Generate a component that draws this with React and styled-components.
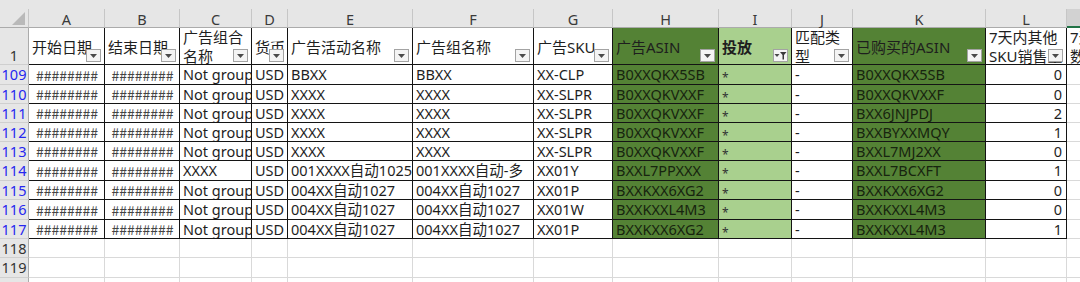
import React from "react";
import styled, { createGlobalStyle } from "styled-components";

const WIDTHS = [29, 76, 75, 72, 36, 125, 121, 79, 106, 73, 61, 133, 81, 80];
const TEMPLATE = WIDTHS.map((w) => `${w}px`).join(" ");
const HEIGHTS = [9, 19, 37, 20, 19, 19, 19, 19, 20, 19, 20, 19, 19, 20, 20];
const ROWS_TEMPLATE = HEIGHTS.map((h) => `${h}px`).join(" ");

const DARK = "#548235";
const LIGHT = "#a9d08e";
const FONT = `"Noto Sans", "Noto Sans CJK SC", sans-serif`;

const GlobalStyle = createGlobalStyle`
  html, body { margin: 0; padding: 0; background: #ffffff; overflow: hidden; }
  body { font-family: ${FONT}; }
`;

const Sheet = styled.div`
  display: grid;
  grid-template-columns: ${TEMPLATE};
  grid-template-rows: ${ROWS_TEMPLATE};
  width: max-content;
  font-family: ${FONT};
  font-size: 14.5px;
  color: #1e1e1e;
`;

const TopBand = styled.div`
  grid-column: 1 / -1;
  background: #e6e6e6;
`;

const Corner = styled.div`
  background: #e6e6e6;
  border-right: 1px solid #c6c6c6;
  border-bottom: 1px solid #ababab;
  box-sizing: border-box;
  display: flex;
  align-items: flex-end;
  justify-content: flex-end;
  padding: 0 2px 1px 0;
`;

const ColLetter = styled.div`
  background: ${(p) => (p.$active ? "#d2d2d2" : "#e6e6e6")};
  border-right: 1px solid #c6c6c6;
  border-bottom: ${(p) => (p.$active ? "2px solid #217346" : "1px solid #ababab")};
  box-sizing: border-box;
  display: flex;
  align-items: center;
  justify-content: center;
  padding-top: 2px;
  font-size: 14.5px;
  line-height: 1;
  color: #3a3a3a;
`;

const RowNum = styled.div`
  background: #e6e6e6;
  border-right: 1px solid #ababab;
  border-bottom: 1px solid #cfcfcf;
  box-sizing: border-box;
  display: flex;
  justify-content: center;
  align-items: ${(p) => (p.$bottom ? "flex-end" : "center")};
  padding-bottom: ${(p) => (p.$bottom ? "2px" : "0")};
  font-size: 14.5px;
  line-height: 1;
  color: ${(p) => (p.$filtered ? "#2626f0" : "#333333")};
`;

const HeadCell = styled.div`
  position: relative;
  background: ${(p) => p.$fill || "#ffffff"};
  border-right: 1px solid #141414;
  border-bottom: 1px solid #141414;
  box-sizing: border-box;
  padding: 2px 2px 0 3px;
  display: flex;
  align-items: center;
  overflow: hidden;
  line-height: 19px;
  font-size: 15px;
  font-weight: ${(p) => (p.$bold ? 700 : 400)};
  color: #1e1e1e;
`;

const DropButton = styled.span`
  position: absolute;
  right: 3px;
  bottom: 2px;
  width: 15px;
  height: 13px;
  box-sizing: border-box;
  border: 1px solid #a3a3a3;
  background: #f4f4f4;
  display: flex;
  align-items: center;
  justify-content: center;
`;

const Cell = styled.div`
  background: ${(p) => p.$fill || "#ffffff"};
  border-right: 1px solid ${(p) => (p.$grid ? "#d9d9d9" : "#141414")};
  border-bottom: 1px solid ${(p) => (p.$grid ? "#d9d9d9" : "#141414")};
  box-sizing: border-box;
  padding: 0 ${(p) => (p.$align === "flex-end" ? "4px" : "2px")} 0 3px;
  display: flex;
  align-items: center;
  justify-content: ${(p) => p.$align || "flex-start"};
  white-space: nowrap;
  overflow: hidden;
  font-family: ${(p) => (p.$hash ? `"Noto Sans CJK SC", sans-serif` : FONT)};
  font-size: ${(p) => (p.$hash ? "14px" : "14.5px")};
  line-height: 1;
  color: ${(p) => (p.$hash ? "#444444" : p.$fill === DARK ? "#17240f" : "#1e1e1e")};
`;

const Star = styled.span`
  font-size: 12px;
  padding-top: 7px;
  color: #333333;
`;

const DownArrow = () => (
  <svg width="7" height="4" viewBox="0 0 7 4">
    <polygon points="0,0 7,0 3.5,4" fill="#4a4a4a" />
  </svg>
);

const FunnelArrow = () => (
  <svg width="13" height="11" viewBox="0 0 13 11">
    <polygon points="0.5,4 5.5,4 3,7" fill="#4a4a4a" />
    <polygon points="6,2 12.5,2 10,5 10,9.5 8.5,9.5 8.5,5" fill="#3a3a3a" />
  </svg>
);

const CornerTriangle = () => (
  <svg width="15" height="15" viewBox="0 0 15 15">
    <polygon points="14,1 14,14 1,14" fill="#b9b9b9" />
  </svg>
);

const LETTERS = ["A", "B", "C", "D", "E", "F", "G", "H", "I", "J", "K", "L", "M"];

const HEADERS = [
  { t: "开始日期" },
  { t: "结束日期" },
  { t: "广告组合名称" },
  { t: "货币" },
  { t: "广告活动名称" },
  { t: "广告组名称" },
  { t: "广告SKU" },
  { t: "广告ASIN", fill: DARK },
  { t: "投放", fill: LIGHT, bold: true, filtered: true },
  { t: "匹配类型" },
  { t: "已购买的ASIN", fill: DARK },
  { t: "7天内其他SKU销售量" },
  { t: "7天总订单数量" },
];

const DATA = [
  [109, "Not group", "BBXX", "BBXX", "XX-CLP", "B0XXQKX5SB", "B0XXQKX5SB", 0],
  [110, "Not group", "XXXX", "XXXX", "XX-SLPR", "B0XXQKVXXF", "B0XXQKVXXF", 0],
  [111, "Not group", "XXXX", "XXXX", "XX-SLPR", "B0XXQKVXXF", "BXX6JNJPDJ", 2],
  [112, "Not group", "XXXX", "XXXX", "XX-SLPR", "B0XXQKVXXF", "BXXBYXXMQY", 1],
  [113, "Not group", "XXXX", "XXXX", "XX-SLPR", "B0XXQKVXXF", "BXXL7MJ2XX", 0],
  [114, "XXXX", "001XXXX自动1025", "001XXXX自动-多", "XX01Y", "BXXL7PPXXX", "BXXL7BCXFT", 1],
  [115, "Not group", "004XX自动1027", "004XX自动1027", "XX01P", "BXXKXX6XG2", "BXXKXX6XG2", 0],
  [116, "Not group", "004XX自动1027", "004XX自动1027", "XX01W", "BXXKXXL4M3", "BXXKXXL4M3", 0],
  [117, "Not group", "004XX自动1027", "004XX自动1027", "XX01P", "BXXKXX6XG2", "BXXKXXL4M3", 1],
];

const EMPTY_ROWS = ["118", "119", "120"];

function DataRow({ row }) {
  const [n, c, e, f, g, h, k, l] = row;
  return (
    <>
      <RowNum $filtered>{n}</RowNum>
      <Cell $align="center" $hash>########</Cell>
      <Cell $align="center" $hash>########</Cell>
      <Cell>{c}</Cell>
      <Cell>USD</Cell>
      <Cell>{e}</Cell>
      <Cell>{f}</Cell>
      <Cell>{g}</Cell>
      <Cell $fill={DARK}>{h}</Cell>
      <Cell $fill={LIGHT}>
        <Star>*</Star>
      </Cell>
      <Cell>-</Cell>
      <Cell $fill={DARK}>{k}</Cell>
      <Cell $align="flex-end">{l}</Cell>
      <Cell $grid />
    </>
  );
}

function EmptyRow({ label }) {
  return (
    <>
      <RowNum>{label}</RowNum>
      {LETTERS.map((l) => (
        <Cell key={l} $grid />
      ))}
    </>
  );
}

export default function App() {
  return (
    <>
      <GlobalStyle />
      <Sheet>
        <TopBand />
        <Corner>
          <CornerTriangle />
        </Corner>
        {LETTERS.map((l) => (
          <ColLetter key={l} $active={l === "M"}>
            {l}
          </ColLetter>
        ))}
        <RowNum $bottom>1</RowNum>
        {HEADERS.map((h) => (
          <HeadCell key={h.t} $fill={h.fill} $bold={h.bold}>
            <span>{h.t}</span>
            <DropButton>{h.filtered ? <FunnelArrow /> : <DownArrow />}</DropButton>
          </HeadCell>
        ))}
        {DATA.map((r) => (
          <DataRow key={r[0]} row={r} />
        ))}
        {EMPTY_ROWS.map((r) => (
          <EmptyRow key={r} label={r} />
        ))}
      </Sheet>
    </>
  );
}
